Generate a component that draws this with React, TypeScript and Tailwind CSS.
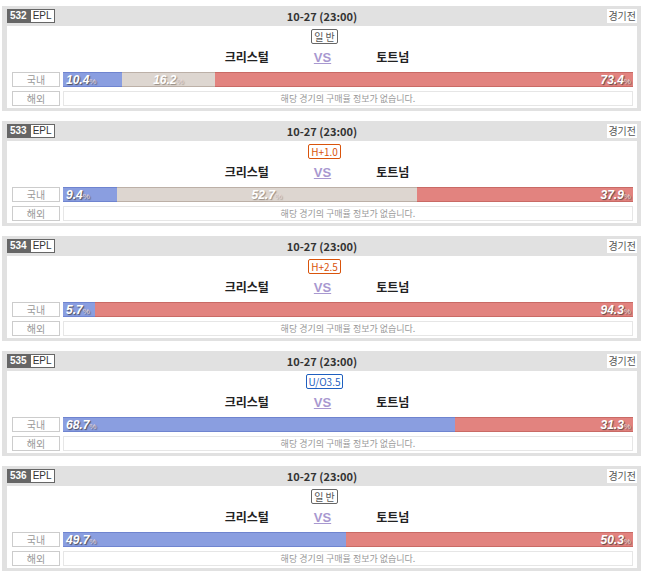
import React from "react";

type Game = {
  no: string;
  badge: string;
  badgeType: "normal" | "handicap" | "uo";
  blue: number;
  gray: number;
  red: number;
};

const games: Game[] = [
  { no: "532", badge: "일 반", badgeType: "normal", blue: 10.4, gray: 16.2, red: 73.4 },
  { no: "533", badge: "H+1.0", badgeType: "handicap", blue: 9.4, gray: 52.7, red: 37.9 },
  { no: "534", badge: "H+2.5", badgeType: "handicap", blue: 5.7, gray: 0, red: 94.3 },
  { no: "535", badge: "U/O3.5", badgeType: "uo", blue: 68.7, gray: 0, red: 31.3 },
  { no: "536", badge: "일 반", badgeType: "normal", blue: 49.7, gray: 0, red: 50.3 },
];

const kr = { fontFamily: '"Noto Sans CJK KR", "Noto Sans", sans-serif' };
const num = { fontFamily: '"Liberation Sans", Arial, sans-serif' };

function Pct({ v, soft }: { v: number; soft?: boolean }) {
  return (
    <span
      className={`text-[12px] font-bold italic text-white leading-none ${
        soft
          ? "[text-shadow:1px_1px_1px_rgba(120,110,100,0.7)]"
          : "[text-shadow:1px_1px_1px_rgba(60,60,60,0.8)]"
      }`}
      style={num}
    >
      {v.toFixed(1)}
      <span className="text-[8px] font-normal text-[#eadcdc] not-italic">%</span>
    </span>
  );
}

function Block({ g }: { g: Game }) {
  const badgeCls =
    g.badgeType === "normal"
      ? "border-[#666] text-[#555]"
      : g.badgeType === "handicap"
      ? "border-[#d9540c] text-[#d9540c]"
      : "border-[#1f5fbf] text-[#1f5fbf]";
  return (
    <div className="bg-[#e1e1e1] pl-[5px] pr-[4px] pb-[3px] mb-[10px]" style={kr}>
      <div className="h-[20px] grid grid-cols-[1fr_auto_1fr] items-center">
        <div className="flex">
          <div className="h-[14px] flex items-center bg-[#666] text-white text-[10px] font-bold px-[3px] leading-none" style={num}>
            {g.no}
          </div>
          <div className="h-[14px] flex items-center bg-white border border-[#666] text-[#333] text-[10px] px-[2px] leading-none" style={num}>
            EPL
          </div>
        </div>
        <div className="text-[11px] font-bold text-[#333] leading-none">10-27 (23:00)</div>
        <div className="flex justify-end">
          <div className="h-[14px] flex items-center bg-white text-[#555] text-[10px] px-[1px] leading-none">경기전</div>
        </div>
      </div>
      <div className="bg-white h-[82px] pl-[5px] flex flex-col">
        <div className="flex justify-center pt-[3px]">
          <div className={`h-[15px] flex items-center border rounded-[2px] px-[2px] text-[10px] leading-none ${badgeCls}`}>
            {g.badge}
          </div>
        </div>
        <div className="flex items-center h-[26px] pr-[4px]">
          <div className="flex-1 text-right text-[12px] font-bold text-[#222]">크리스털</div>
          <div className="mx-[45px] text-[13px] font-bold text-[#a898d0] underline leading-none" style={num}>
            VS
          </div>
          <div className="flex-1 text-left text-[12px] font-bold text-[#222]">토트넘</div>
        </div>
        <div className="flex gap-[3px] h-[15px] mt-[2px]">
          <div className="w-[48px] h-[15px] border border-[#ccc] flex items-center justify-center text-[10px] text-[#999] leading-none">
            국내
          </div>
          <div className="w-[570px] h-[15px] flex">
            {g.blue > 0 && (
              <div
                className="h-full bg-[#8a9ee0] border-y border-[#6f84cf] flex items-center pl-[3px]"
                style={{ width: `${g.blue}%` }}
              >
                <Pct v={g.blue} />
              </div>
            )}
            {g.gray > 0 && (
              <div
                className="h-full bg-[#ddd6d0] border-y border-[#bcb0a7] flex items-center justify-center"
                style={{ width: `${g.gray}%` }}
              >
                <Pct v={g.gray} soft />
              </div>
            )}
            {g.red > 0 && (
              <div
                className="h-full bg-[#e2837f] border-y border-[#c96a65] flex items-center justify-end pr-[2px]"
                style={{ width: `${g.red}%` }}
              >
                <Pct v={g.red} />
              </div>
            )}
          </div>
        </div>
        <div className="flex gap-[3px] h-[15px] mt-[4px]">
          <div className="w-[48px] h-[15px] border border-[#ccc] flex items-center justify-center text-[10px] text-[#999] leading-none">
            해외
          </div>
          <div className="w-[570px] h-[15px] border border-[#e6e6e6] flex items-center justify-center text-[9px] text-[#999] leading-none">
            해당 경기의 구매율 정보가 없습니다.
          </div>
        </div>
      </div>
    </div>
  );
}

export default function App() {
  return (
    <div className="w-[647px] h-[578px] bg-white pt-[6px]">
      <div className="ml-[2px] w-[639px]">
        {games.map((g) => (
          <Block key={g.no} g={g} />
        ))}
      </div>
    </div>
  );
}
